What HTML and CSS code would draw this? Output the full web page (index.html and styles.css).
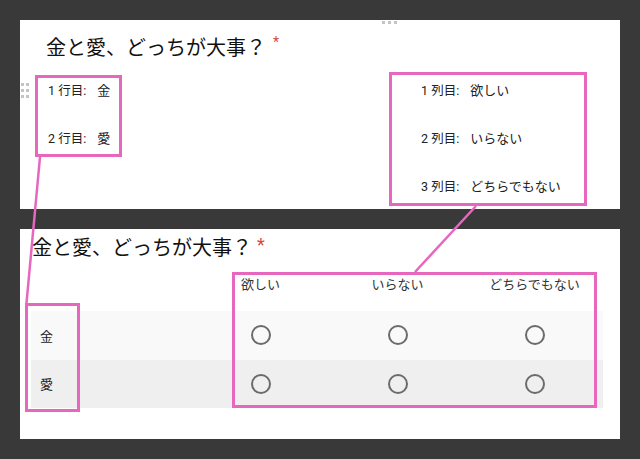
FILE: index.html
```html
<!DOCTYPE html>
<html lang="ja">
<head>
<meta charset="UTF-8">
<meta name="viewport" content="width=device-width, initial-scale=1.0">
<title>グリッド質問</title>
<link rel="stylesheet" href="styles.css">
</head>
<body>

<div class="page">

  <!-- edit view -->
  <div class="panel panel-edit">
    <div class="handle-top"><i></i><i></i><i></i></div>
    <div class="handle-left"><i></i><i></i><i></i><i></i><i></i><i></i></div>
    <div class="title title-edit">金と愛、どっちが大事？<span class="req">*</span></div>
    <div class="options">
      <div class="opt-col">
        <div class="opt"><span class="num">1 行目:</span><span>金</span></div>
        <div class="opt"><span class="num">2 行目:</span><span>愛</span></div>
      </div>
      <div class="opt-col">
        <div class="opt"><span class="num">1 列目:</span><span>欲しい</span></div>
        <div class="opt"><span class="num">2 列目:</span><span>いらない</span></div>
        <div class="opt"><span class="num">3 列目:</span><span>どちらでもない</span></div>
      </div>
    </div>
  </div>

  <!-- preview -->
  <div class="panel panel-view">
    <div class="title title-view">金と愛、どっちが大事？<span class="req req-big">*</span></div>
    <div class="grid">
      <div class="grid-head">
        <div></div>
        <div class="col-label">欲しい</div>
        <div class="col-label">いらない</div>
        <div class="col-label">どちらでもない</div>
      </div>
      <div class="grid-row row-light">
        <div class="row-label">金</div>
        <div class="cell"><span class="radio"></span></div>
        <div class="cell"><span class="radio"></span></div>
        <div class="cell"><span class="radio"></span></div>
      </div>
      <div class="grid-row row-dark">
        <div class="row-label">愛</div>
        <div class="cell"><span class="radio"></span></div>
        <div class="cell"><span class="radio"></span></div>
        <div class="cell"><span class="radio"></span></div>
      </div>
    </div>
  </div>

  <!-- annotations drawn over the screenshot -->
  <svg class="marks" width="640" height="459" viewBox="0 0 640 459">
    <g fill="none" stroke="#e767bf" stroke-width="3">
      <rect x="36.5" y="76.5" width="84" height="79"/>
      <rect x="390.5" y="73.5" width="195" height="131"/>
      <rect x="26.5" y="304.5" width="52" height="106"/>
      <rect x="233.5" y="273.5" width="362" height="133"/>
    </g>
    <g stroke="#e767bf" stroke-width="2.5">
      <line x1="40" y1="157" x2="26.5" y2="303"/>
      <line x1="476" y1="206" x2="415" y2="272"/>
    </g>
  </svg>

</div>

</body>
</html>
```

FILE: styles.css
```css
body {
  margin: 0;
  background-color: #393939;
  font-family: Roboto, "Noto Sans CJK JP", sans-serif;
  color: #202124;
}
.page {
  position: relative;
  width: 640px;
  height: 459px;
  padding: 20px 20px 0;
  box-sizing: border-box;
}
.panel {
  position: relative;
  background-color: #fff;
}
.panel-edit {
  height: 189px;
  padding-top: 14px;
  box-sizing: border-box;
}
.panel-view {
  height: 210px;
  margin-top: 20px;
  padding-top: 5px;
  box-sizing: border-box;
}
.title {
  font-size: 20px;
  line-height: 28px;
  height: 28px;
  color: #111;
}
.title-edit {
  padding-left: 26px;
}
.title-view {
  padding-left: 12px;
}
.req {
  color: #d9483b;
  font-size: 14px;
  margin-left: 7px;
  vertical-align: top;
  line-height: 16px;
}
.req-big {
  font-size: 18px;
  margin-left: 5px;
  line-height: 22px;
}

/* drag handles */
.handle-top {
  position: absolute;
  left: 362px;
  top: 1px;
  display: flex;
  gap: 3px;
}
.handle-left {
  position: absolute;
  left: 1px;
  top: 63px;
  display: grid;
  grid-template-columns: 3px 3px;
  gap: 3px 2px;
}
.handle-top i,
.handle-left i {
  display: block;
  width: 3px;
  height: 3px;
  background-color: #c4c4c4;
}

/* edit options */
.options {
  display: grid;
  grid-template-columns: 373px 1fr;
  padding-left: 28px;
  margin-top: 5px;
}
.opt {
  height: 48px;
  line-height: 48px;
  font-size: 13px;
  display: flex;
  gap: 11px;
}
.num {
  font-size: 12.5px;
}

/* preview grid */
.grid {
  margin-left: 11px;
  width: 572px;
}
.grid-head,
.grid-row {
  display: grid;
  grid-template-columns: 161px repeat(3, 137px);
  align-items: center;
}
.grid-head {
  height: 49px;
  align-items: start;
}
.col-label {
  text-align: center;
  font-size: 13px;
  line-height: 20px;
  padding-top: 13px;
  color: #333;
}
.grid-row {
  height: 48.5px;
}
.row-light {
  background-color: #f9f9f9;
}
.row-dark {
  background-color: #efefef;
}
.row-label {
  padding-left: 9px;
  font-size: 13px;
  color: #222;
}
.cell {
  display: flex;
  justify-content: center;
}
.radio {
  width: 16px;
  height: 16px;
  border: 2px solid #6b6b6b;
  border-radius: 50%;
}

.marks {
  position: absolute;
  left: 0;
  top: 0;
}
```
